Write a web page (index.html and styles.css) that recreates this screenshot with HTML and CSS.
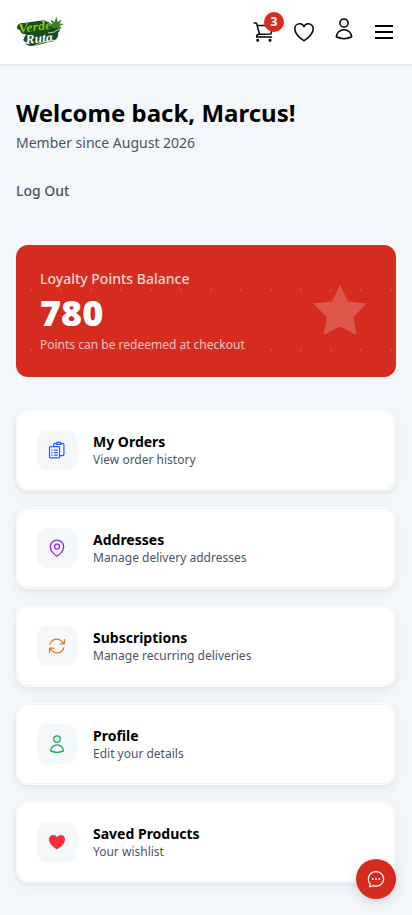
FILE: index.html
```html
<!DOCTYPE html>
<html lang="en">
<head>
<meta charset="utf-8">
<meta name="viewport" content="width=device-width, initial-scale=1">
<title>Verde Ruta – My Account</title>
<link rel="stylesheet" href="styles.css">
</head>
<body>
<header class="header">
  <a class="logo" href="#" aria-label="Verde Ruta">
    <svg width="48" height="32" viewBox="0 0 48 32">
      <defs><linearGradient id="leaf" x1="0" y1="0" x2="0" y2="1"><stop offset="0" stop-color="#b4e61c"/><stop offset="1" stop-color="#5cb514"/></linearGradient></defs>
      <path d="M1 11Q2 7 8 7L22 5Q31 4 35 8L43 11Q45 14 42 17Q43 21 39 24Q33 25 29 27Q22 30 15 30Q10 30 11 26Q6 26 8 22L10 18Q5 19 4 14Q1 14 1 11Z" fill="#174d1c"/>
      <path d="M36 12 L32 8 L37 8.500 L34 3.500 L38.500 6 L40.500 .5 L41.500 6 L46 3.500 L43.500 7.500 L48 8 L43.500 10 L46 12.500 L40 12Z" fill="#3a7d22"/>
      <text class="logo-verde" x="3" y="17" transform="rotate(-7 3 17)" textLength="33" lengthAdjust="spacingAndGlyphs" fill="url(#leaf)">Verde</text>
      <text class="logo-ruta" x="10" y="28" transform="rotate(-6 10 28)" textLength="27" lengthAdjust="spacingAndGlyphs">Ruta</text>
      <path d="M19 29.500 Q27 25 38 24 M32 17 Q39 17 43 13" fill="none" stroke="#cfe0c6" stroke-width=".9"/>
    </svg>
  </a>
  <nav class="actions">
    <a class="action" href="#" aria-label="Cart">
      <svg width="24" height="24" viewBox="0 0 24 24" fill="none" stroke="#000" stroke-width="1.500" stroke-linecap="round" stroke-linejoin="round"><path d="M2.250 3h1.400c.5 0 .95.35 1.080.84L7.500 14.250M5.200 5.500H21l-2 8.400-12 .4c-1.600.1-2.400 1-2.400 2.700H19.500"/><circle cx="5.700" cy="20.300" r=".75" fill="#000"/><circle cx="18" cy="20.300" r=".75" fill="#000"/></svg>
      <span class="badge">3</span>
    </a>
    <a class="action" href="#" aria-label="Wishlist">
      <svg width="24" height="24" viewBox="0 0 24 24" fill="none" stroke="#000" stroke-width="1.500" stroke-linejoin="round"><path d="M21.200 8.800c0-2.900-2.100-5-4.800-5-1.900 0-3.600 1.200-4.400 2.800-.8-1.600-2.500-2.800-4.400-2.800-2.700 0-4.800 2.100-4.800 5 0 6.200 6.400 10 9.200 12 2.800-2 9.200-5.800 9.200-12z"/></svg>
    </a>
    <a class="action action-user" href="#" aria-label="Account">
      <svg width="24" height="24" viewBox="0 0 24 24" fill="none" stroke="#000" stroke-width="1.500" stroke-linejoin="round"><circle cx="12" cy="6" r="4.100"/><path d="M4.300 19.800c.2-4 3.700-7.100 7.700-7.100s7.500 3.100 7.700 7.100c-4.800 2.300-10.600 2.300-15.400 0z"/></svg>
    </a>
    <a class="action" href="#" aria-label="Menu">
      <svg width="24" height="24" viewBox="0 0 24 24" fill="none" stroke="#000" stroke-width="2"><path d="M3 6h18M3 12h18M3 18h18"/></svg>
    </a>
  </nav>
</header>
<main class="main">
  <h1 class="title">Welcome back, Marcus!</h1>
  <p class="since">Member since August 2026</p>
  <button class="logout" type="button">Log Out</button>

  <section class="points">
    <div>
      <p class="points-label">Loyalty Points Balance</p>
      <p class="points-value">780</p>
      <p class="points-note">Points can be redeemed at checkout</p>
    </div>
    <svg class="star" width="64" height="64" viewBox="0 0 64 64"><path d="M32 5.500 39.800 22.500 58.500 24.500 45.500 38.200 48.500 56.200 32 47.500 15.500 56.200 18.800 38.200 5.200 24.500 24.200 22.500z" fill="#fff"/></svg>
  </section>

  <section class="cards">
    <a class="card" href="#">
      <span class="tile blue"><svg width="20" height="20" viewBox="0 0 24 24"><path d="M8 7V5.500C8 4.600 8.700 4 9.600 4H11M17 4h1.500c1 0 1.800.8 1.800 1.800V17c0 1-.8 1.700-1.700 1.700H15.500M11 5.300c0-1.700 1-2.900 3-2.900s3 1.200 3 2.900zM4.200 8h9.600c.8 0 1.300.5 1.300 1.300v11c0 .7-.5 1.200-1.300 1.200H4.200c-.7 0-1.200-.5-1.200-1.200v-11C3 8.500 3.500 8 4.200 8zM9 12h3.500M9 15h3.500M9 18h3.500M5.700 12h.6M5.700 15h.6M5.700 18h.6"/></svg></span>
      <span class="text"><strong class="name">My Orders</strong><span class="desc">View order history</span></span>
    </a>
    <a class="card" href="#">
      <span class="tile purple"><svg width="20" height="20" viewBox="0 0 24 24"><circle cx="12" cy="10.300" r="3"/><path d="M20 10.500c0 7-8 11.300-8 11.300S4 17.500 4 10.500a8 8 0 0 1 16 0z"/></svg></span>
      <span class="text"><strong class="name">Addresses</strong><span class="desc">Manage delivery addresses</span></span>
    </a>
    <a class="card" href="#">
      <span class="tile orange"><svg width="20" height="20" viewBox="0 0 24 24"><path d="M16 9.350h5V4.400M3 19.600v-5h5M3.500 9.900a8.300 8.300 0 0 1 13.900-3.700L21 9.350M3 14.650l3.200 3.200a8.300 8.300 0 0 0 13.900-3.700"/></svg></span>
      <span class="text"><strong class="name">Subscriptions</strong><span class="desc">Manage recurring deliveries</span></span>
    </a>
    <a class="card" href="#">
      <span class="tile green"><svg width="20" height="20" viewBox="0 0 24 24"><circle cx="12" cy="6" r="3.900"/><path d="M4.300 20.200c.2-4.100 3.700-7.200 7.700-7.200s7.500 3.100 7.700 7.200c-4.800 2.200-10.600 2.200-15.400 0z"/></svg></span>
      <span class="text"><strong class="name">Profile</strong><span class="desc">Edit your details</span></span>
    </a>
    <a class="card" href="#">
      <span class="tile red"><svg width="20" height="20" viewBox="0 0 24 24"><path d="M21.600 8.700c0-2.900-2.200-5-5-5-2 0-3.700 1-4.600 2.600-.9-1.600-2.600-2.600-4.600-2.600-2.800 0-5 2.100-5 5 0 6.200 6.400 10 9.600 12.200 3.200-2.200 9.600-6 9.600-12.200z"/></svg></span>
      <span class="text"><strong class="name">Saved Products</strong><span class="desc">Your wishlist</span></span>
    </a>
  </section>
</main>
<button class="chat" type="button" aria-label="Chat">
  <svg width="20" height="20" viewBox="0 0 24 24" fill="none" stroke="#fff" stroke-width="1.500" stroke-linecap="round" stroke-linejoin="round"><path d="M12 3.200c5.200 0 9.200 3.900 9.200 8.700s-4 8.700-9.200 8.700c-1.200 0-2.300-.2-3.300-.6-1.300.9-2.900 1.400-4.600 1.200.8-1 1.200-2 1-3.200-1.500-1.600-2.300-3.700-2.300-6.100 0-4.800 4-8.700 9.200-8.700z"/><path d="M8 12h.01M12 12h.01M16 12h.01" stroke-width="2.300"/></svg>
</button>
</body>
</html>
```
FILE: styles.css
```css
* { box-sizing: border-box; }

html { height: 100%; overflow: hidden; }

body {
  margin: 0;
  height: 100%;
  overflow: hidden;
  background: #f3f7fa;
  color: #000;
  font-family: "Noto Sans", sans-serif;
}

a { color: inherit; text-decoration: none; }
h1, p { margin: 0; }
svg { display: block; }

button {
  border: 0;
  padding: 0;
  background: none;
  font: inherit;
}

.header {
  display: flex;
  align-items: center;
  justify-content: space-between;
  height: 65px;
  padding: 0 16px;
  background: #fff;
  border-bottom: 1px solid #e5e7eb;
  box-shadow: 0 1px 2px rgba(0, 0, 0, .04);
}

.logo-verde,
.logo-ruta {
  font: italic 700 13px "Liberation Serif", serif;
  stroke: #123d19;
  stroke-width: .8px;
  paint-order: stroke;
}

.logo-ruta { fill: #fff; }

.actions { display: flex; gap: 16px; }
.action { position: relative; }
.action-user { margin-top: -3px; }

.badge {
  position: absolute;
  top: -8px;
  left: 12px;
  width: 20px;
  height: 20px;
  border-radius: 50%;
  background: #d62b1f;
  color: #fff;
  font-size: 12px;
  font-weight: 700;
  line-height: 20px;
  text-align: center;
}

.main { padding: 32px 16px; }

.title {
  font-size: 24px;
  font-weight: 700;
  line-height: 32px;
}

.since {
  margin-top: 4px;
  color: #4b5563;
  font-size: 14px;
  line-height: 20px;
}

.logout {
  display: block;
  margin: 28px 0 44px;
  color: #4b5563;
  font-size: 14px;
  font-weight: 500;
  line-height: 20px;
}

.points {
  display: flex;
  align-items: center;
  justify-content: space-between;
  height: 132px;
  padding: 0 24px;
  border-radius: 12px;
  background: radial-gradient(circle at 15px 45px, rgba(255, 255, 255, .12) .8px, transparent 1.2px) 0 0 / 30px 60px #d62b1f;
  color: #fff;
}

.points-label {
  opacity: .8;
  font-size: 14px;
  font-weight: 500;
  line-height: 20px;
}

.points-value {
  margin: 4px 0;
  font-size: 36px;
  font-weight: 900;
  line-height: 40px;
}

.points-note {
  opacity: .7;
  font-size: 12px;
  line-height: 16px;
}

.star { opacity: .2; }

.cards {
  display: grid;
  gap: 16px;
  margin-top: 32px;
}

.card {
  display: flex;
  align-items: center;
  gap: 16px;
  height: 82px;
  padding: 0 20px;
  border: 1px solid #fcfdfd;
  border-radius: 12px;
  background: #fff;
  box-shadow: inset 0 0 0 1px #f0f2f4, 0 2px 4px rgba(15, 30, 45, .05), 0 4px 14px rgba(15, 30, 45, .04);
}

.tile {
  display: grid;
  place-items: center;
  width: 40px;
  height: 40px;
  border-radius: 10px;
  background: #f5f8fb;
}

.tile svg {
  fill: none;
  stroke: currentColor;
  stroke-width: 1.5;
  stroke-linecap: round;
  stroke-linejoin: round;
}

.blue { color: #2563eb; }
.purple { color: #9326e8; }
.orange { color: #e07a0c; }
.green { color: #16a651; }
.red { color: #fb2c36; }
.tile.red svg { fill: currentColor; stroke: none; }

.text { display: grid; }
.name { font-size: 14px; font-weight: 700; line-height: 20px; }
.desc { color: #4b5563; font-size: 12px; line-height: 16px; }

.chat {
  position: fixed;
  right: 16px;
  bottom: 16px;
  display: grid;
  place-items: center;
  width: 40px;
  height: 40px;
  border-radius: 50%;
  background: #d62b1f;
  box-shadow: 0 4px 12px rgba(0, 0, 0, .12);
}
```
